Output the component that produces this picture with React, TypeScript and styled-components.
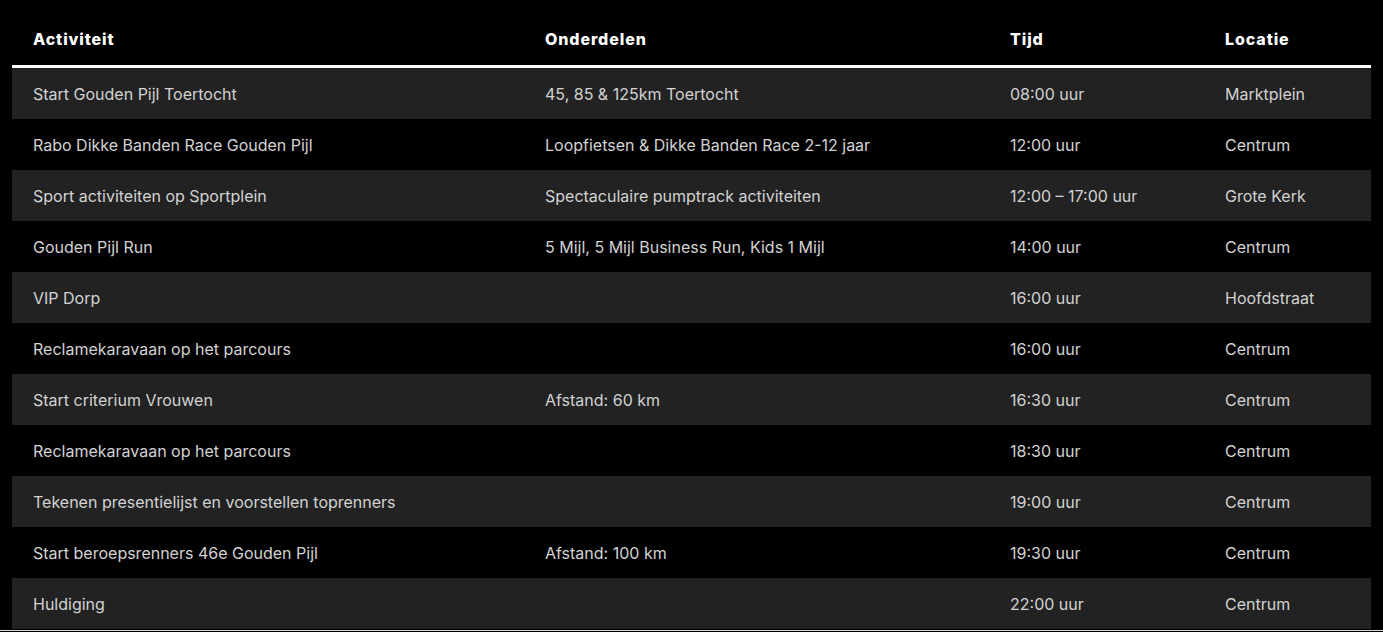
import React from "react";
import styled, { createGlobalStyle } from "styled-components";

const Global = createGlobalStyle`
  html, body { margin: 0; padding: 0; background: #000; }
  body { font-family: Inter, "Noto Sans", sans-serif; }
`;

const Page = styled.div`
  background: #000;
  padding: 0 12px;
  height: 630px;
  border-bottom: 1px solid #d8d8d8;
  overflow: hidden;
`;

const Table = styled.table`
  width: 100%;
  border-collapse: separate;
  border-spacing: 0;
  table-layout: fixed;
`;

const Th = styled.th<{ $w: number }>`
  box-sizing: border-box;
  width: ${(p) => p.$w}px;
  text-align: left;
  padding: 31px 21px 18px;
  border-bottom: 3px solid #fff;
  font-family: Inter, sans-serif;
  font-weight: 800;
  font-size: 16px;
  line-height: 16px;
  letter-spacing: 0.9px;
  color: #fff;
`;

const Row = styled.tr<{ $alt: boolean }>`
  background: ${(p) => (p.$alt ? "#222222" : "#000")};
`;

const Td = styled.td`
  box-sizing: border-box;
  height: 51px;
  padding: 0 21px;
  font-size: 16px;
  line-height: 20px;
  color: #d2d2d2;
  white-space: nowrap;
  vertical-align: middle;
`;

const rows: [string, string, string, string][] = [
  ["Start Gouden Pijl Toertocht", "45, 85 & 125km Toertocht", "08:00 uur", "Marktplein"],
  ["Rabo Dikke Banden Race Gouden Pijl", "Loopfietsen & Dikke Banden Race 2-12 jaar", "12:00 uur", "Centrum"],
  ["Sport activiteiten op Sportplein", "Spectaculaire pumptrack activiteiten", "12:00 – 17:00 uur", "Grote Kerk"],
  ["Gouden Pijl Run", "5 Mijl, 5 Mijl Business Run, Kids 1 Mijl", "14:00 uur", "Centrum"],
  ["VIP Dorp", "", "16:00 uur", "Hoofdstraat"],
  ["Reclamekaravaan op het parcours", "", "16:00 uur", "Centrum"],
  ["Start criterium Vrouwen", "Afstand: 60 km", "16:30 uur", "Centrum"],
  ["Reclamekaravaan op het parcours", "", "18:30 uur", "Centrum"],
  ["Tekenen presentielijst en voorstellen toprenners", "", "19:00 uur", "Centrum"],
  ["Start beroepsrenners 46e Gouden Pijl", "Afstand: 100 km", "19:30 uur", "Centrum"],
  ["Huldiging", "", "22:00 uur", "Centrum"],
];

export default function App() {
  return (
    <>
      <Global />
      <Page>
        <Table>
          <thead>
            <tr>
              <Th $w={512}>Activiteit</Th>
              <Th $w={465}>Onderdelen</Th>
              <Th $w={215}>Tijd</Th>
              <Th $w={167}>Locatie</Th>
            </tr>
          </thead>
          <tbody>
            {rows.map((r, i) => (
              <Row key={i} $alt={i % 2 === 0}>
                {r.map((c, j) => (
                  <Td key={j}>{c}</Td>
                ))}
              </Row>
            ))}
          </tbody>
        </Table>
      </Page>
    </>
  );
}
